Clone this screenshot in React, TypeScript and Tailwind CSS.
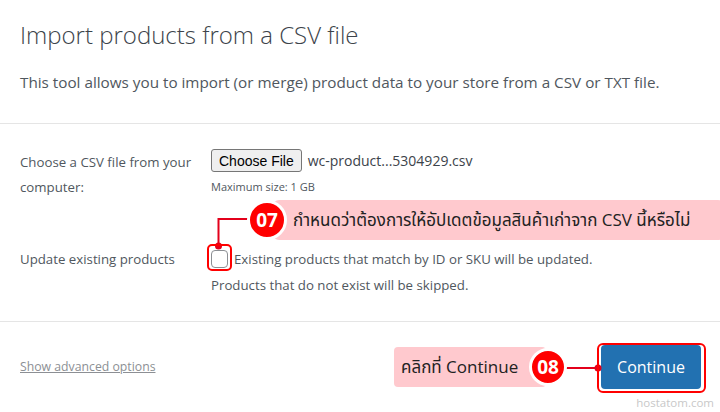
export default function App() {
  const font = { fontFamily: '"Open Sans", "Noto Sans", "Noto Sans Thai", sans-serif' };
  return (
    <div className="relative w-[720px] h-[412px] bg-white overflow-hidden text-[#50575e]" style={font}>
      <div className="px-5 pt-[19px] h-[124px] border-b border-[#e5e5e5]">
        <h1 className="text-[24px] font-light leading-[32px] text-[#3c434a]">Import products from a CSV file</h1>
        <p className="mt-[18px] text-[15.25px] leading-[26px]">
          This tool allows you to import (or merge) product data to your store from a CSV or TXT file.
        </p>
      </div>

      <div className="px-5 pt-[25px] h-[198px] border-b border-[#e5e5e5] text-[13.25px]">
        <div className="flex">
          <div className="w-[191px] leading-[25px] pt-[1px]">Choose a CSV file from your computer:</div>
          <div>
            <div className="flex items-center gap-[6px]">
              <button className="h-[23px] px-[7px] border border-[#767676] rounded-[3px] bg-[#efefef] text-[14px] text-black leading-none" style={{ fontFamily: '"Liberation Sans", Arial, sans-serif' }}>
                Choose File
              </button>
              <span className="text-[14px] text-[#3c434a]">wc-product...5304929.csv</span>
            </div>
            <div className="mt-[7px] text-[11px] text-[#50575e]">Maximum size: 1 GB</div>
          </div>
        </div>
        <div className="flex mt-[49px]">
          <div className="w-[191px] leading-[20px]">Update existing products</div>
          <div className="leading-[20px]">
            <div className="flex items-center gap-[6px]">
              <span className="w-[17px] h-[18px] border border-[#8c8f94] rounded-[4px] bg-white"></span>
              <span>Existing products that match by ID or SKU will be updated.</span>
            </div>
            <div className="mt-[6px]">Products that do not exist will be skipped.</div>
          </div>
        </div>
      </div>

      <div className="flex items-center justify-between pl-5 pr-[19px] pt-[23px]">
        <a className="text-[12.25px] text-[#8c8f94] underline">Show advanced options</a>
        <div className="w-[100px] h-[44px] rounded-[4px] bg-[#2271b1] text-white text-[16px] flex items-center justify-center">
          Continue
        </div>
      </div>

      <div className="absolute right-[6px] bottom-[1px] text-[11.5px] text-[#c8c8c8]">hostatom.com</div>

      {/* annotation connectors and highlight boxes */}
      <svg className="absolute inset-0 pointer-events-none" width="720" height="412">
        <path d="M248 219 H218.5 V246" stroke="#e3001b" strokeWidth="2" fill="none" />
        <circle cx="218.5" cy="246" r="3.5" fill="#e3001b" />
        <rect x="208" y="245" width="23" height="25" rx="4" stroke="#f00" strokeWidth="2" fill="none" />
        <path d="M565 368 H598" stroke="#e3001b" strokeWidth="2" fill="none" />
        <circle cx="598" cy="368" r="3.5" fill="#e3001b" />
        <rect x="598" y="344" width="107" height="48" rx="5" stroke="#f00" strokeWidth="2" fill="none" />
      </svg>

      {/* callout 07 */}
      <div className="absolute left-[247px] top-[200px] flex items-center">
        <div className="w-[40px] h-[40px] z-10 rounded-full bg-[#f00] border-[3px] border-white flex items-center justify-center text-white font-bold text-[19px]">
          07
        </div>
        <div className="-ml-[14px] w-[451px] h-[40px] bg-[#ffc9ce] rounded-[6px] flex items-center pl-[20px] text-[17px] text-[#222]">
          กำหนดว่าต้องการให้อัปเดตข้อมูลสินค้าเก่าจาก CSV นี้หรือไม่
        </div>
      </div>

      {/* callout 08 */}
      <div className="absolute left-[394px] top-[347px] flex items-center">
        <div className="w-[152px] h-[40px] bg-[#ffc9ce] rounded-[4px] flex items-center pl-[7px] text-[17px] text-[#222]">
          คลิกที่ Continue
        </div>
        <div className="-ml-[17px] w-[38px] h-[38px] rounded-full bg-[#f00] border-[3px] border-white flex items-center justify-center text-white font-bold text-[19px]">
          08
        </div>
      </div>
    </div>
  );
}
